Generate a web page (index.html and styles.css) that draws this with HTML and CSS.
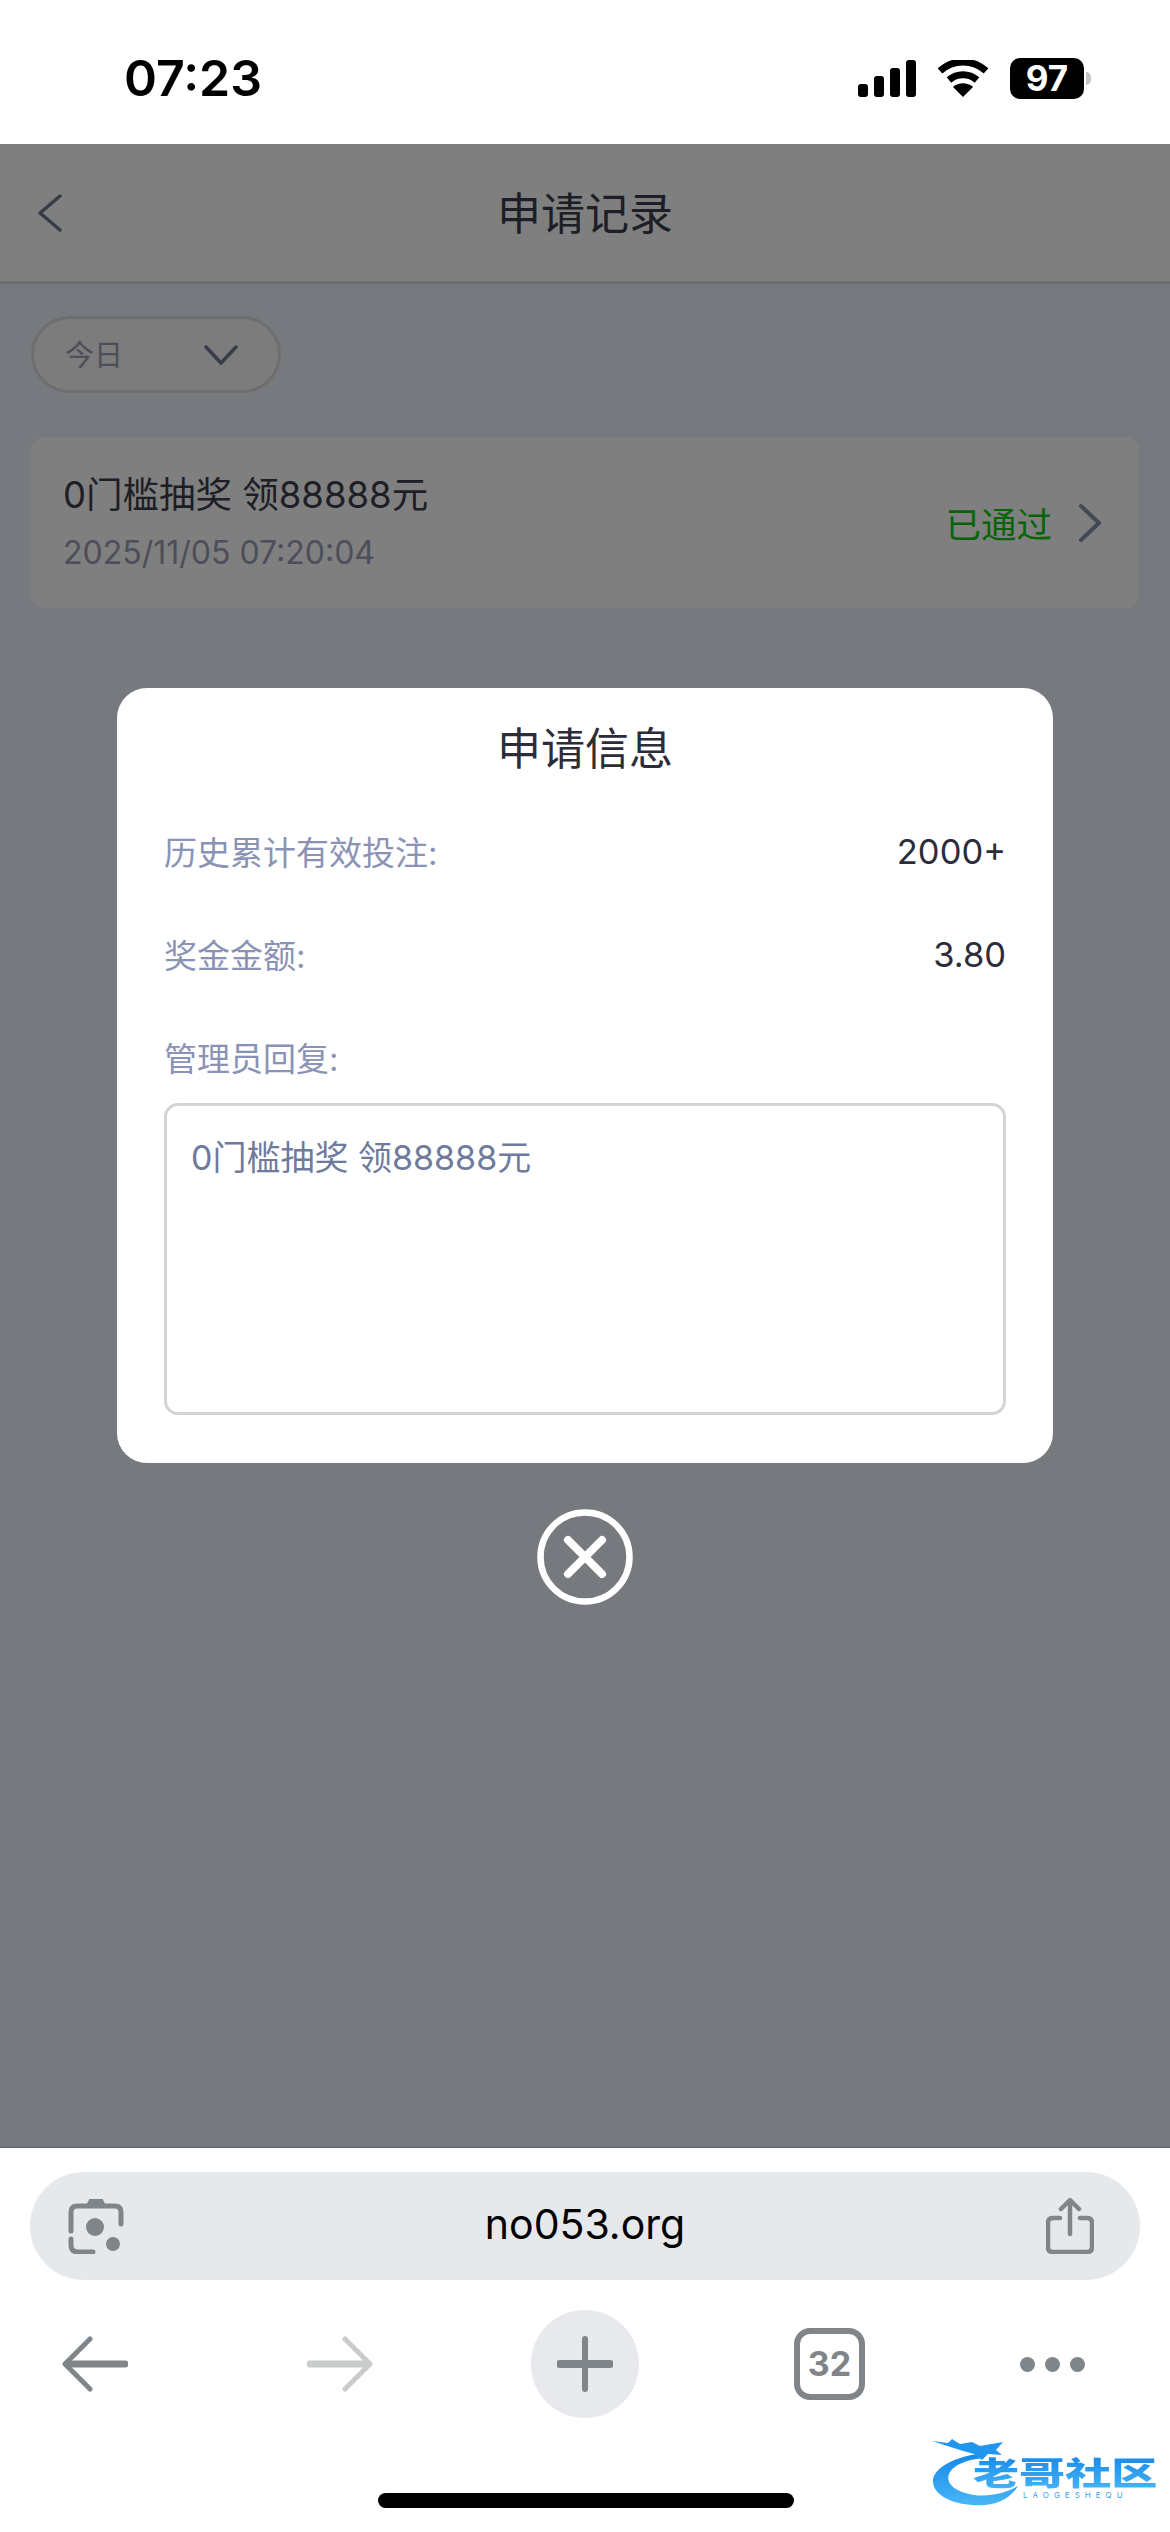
FILE: index.html
```html
<!DOCTYPE html>
<html lang="zh-CN">
<head>
  <meta charset="UTF-8">
  <meta name="viewport" content="width=device-width, initial-scale=1.0">
  <title>申请记录</title>
  <link rel="stylesheet" href="styles.css">
</head>
<body>
  <div class="status-bar">
    <div class="status-bar__time">07:23</div>
    <div class="status-bar__icons">
      <svg class="icon-signal" width="58" height="37" viewBox="0 0 58 37">
        <rect x="0" y="24" width="10" height="13" rx="3"/>
        <rect x="16" y="16" width="10" height="21" rx="3"/>
        <rect x="32" y="8" width="10" height="29" rx="3"/>
        <rect x="48" y="0" width="10" height="37" rx="3"/>
      </svg>
      <svg class="icon-wifi" width="50" height="37" viewBox="0 0 50 37">
        <path d="M2 11 C15 -1 35 -1 48 11" fill="none" stroke="#000" stroke-width="7"/>
        <path d="M11 20 C19 13 31 13 39 20" fill="none" stroke="#000" stroke-width="7"/>
        <path d="M25 37 L15 27 C21 22 29 22 35 27 Z"/>
      </svg>
      <div class="battery">
        <div class="battery__body">97</div>
        <div class="battery__nub"></div>
      </div>
    </div>
  </div>

  <div class="webview">
    <div class="nav">
      <svg class="nav__back" width="26" height="38" viewBox="0 0 26 38">
        <path d="M23 2 L3 19 L23 36" fill="none" stroke="#6c7890" stroke-width="3.5" stroke-linecap="round" stroke-linejoin="round"/>
      </svg>
      <div class="nav__title">申请记录</div>
    </div>

    <div class="records">
      <div class="filter">
        <span class="filter__label">今日</span>
        <svg width="34" height="20" viewBox="0 0 34 20">
          <path d="M2 2 L17 18 L32 2" fill="none" stroke="#6c7890" stroke-width="3.5" stroke-linecap="round" stroke-linejoin="round"/>
        </svg>
      </div>

      <div class="record">
        <div class="record__main">
          <div class="record__title">0门槛抽奖 领88888元</div>
          <div class="record__date">2025/11/05 07:20:04</div>
        </div>
        <div class="record__status">已通过</div>
        <svg class="record__arrow" width="24" height="38" viewBox="0 0 24 38">
          <path d="M3 2 L21 19 L3 36" fill="none" stroke="#8490a8" stroke-width="4" stroke-linecap="round" stroke-linejoin="round"/>
        </svg>
      </div>
    </div>

    <div class="overlay">
      <div class="modal">
        <div class="modal__title">申请信息</div>
        <div class="modal__row">
          <span class="modal__label">历史累计有效投注:</span>
          <span class="modal__value">2000+</span>
        </div>
        <div class="modal__row">
          <span class="modal__label">奖金金额:</span>
          <span class="modal__value">3.80</span>
        </div>
        <div class="modal__row">
          <span class="modal__label">管理员回复:</span>
        </div>
        <div class="modal__reply">0门槛抽奖 领88888元</div>
      </div>
      <svg class="modal-close" width="96" height="96" viewBox="0 0 96 96">
        <circle cx="48" cy="48" r="44.5" fill="none" stroke="#fff" stroke-width="6.5"/>
        <path d="M31 31 L65 65 M65 31 L31 65" fill="none" stroke="#fff" stroke-width="8" stroke-linecap="round"/>
      </svg>
    </div>
  </div>

  <div class="chrome">
    <div class="url-bar">
      <svg class="url-bar__icon" width="56" height="56" viewBox="0 0 56 56" fill="none" stroke="#7f8589" stroke-width="5" stroke-linecap="round">
        <path d="M3 33 V14 Q3 8 9 8 H47 Q53 8 53 14 V26"/>
        <path d="M3 41 V47 Q3 54 10 54 H25"/>
        <path d="M19 8 L22 2 H34 L37 8 Z" fill="#7f8589" stroke-width="2"/>
        <circle cx="27" cy="29" r="9" fill="#7f8589" stroke="none"/>
        <circle cx="45" cy="46" r="7" fill="#7f8589" stroke="none"/>
      </svg>
      <div class="url-bar__text">no053.org</div>
      <svg class="url-bar__icon" width="48" height="56" viewBox="0 0 48 56" fill="none" stroke="#7f8589" stroke-width="4.5" stroke-linecap="round" stroke-linejoin="round">
        <path d="M14 20 H7 Q2 20 2 25 V49 Q2 54 7 54 H41 Q46 54 46 49 V25 Q46 20 41 20 H34"/>
        <path d="M24 36 V3 M15 11 L24 2 L33 11"/>
      </svg>
    </div>

    <div class="toolbar">
      <svg class="toolbar__back" width="66" height="56" viewBox="0 0 66 56" fill="none" stroke="#7f8589" stroke-linecap="round" stroke-linejoin="round">
        <path d="M28 3 L3 28 L28 53" stroke-width="5"/>
        <path d="M5 28 H63" stroke-width="7"/>
      </svg>
      <svg class="toolbar__forward" width="66" height="56" viewBox="0 0 66 56" fill="none" stroke="#c9cbcc" stroke-linecap="round" stroke-linejoin="round">
        <path d="M38 3 L63 28 L38 53" stroke-width="5"/>
        <path d="M3 28 H61" stroke-width="7"/>
      </svg>
      <div class="toolbar__plus">
        <svg width="56" height="56" viewBox="0 0 56 56" fill="none" stroke="#7f8589" stroke-linecap="round">
          <path d="M28 3 V53" stroke-width="6"/>
          <path d="M3 28 H53" stroke-width="8"/>
        </svg>
      </div>
      <div class="toolbar__tabs">32</div>
      <div class="toolbar__more"><i></i><i></i><i></i></div>
    </div>

    <div class="home-indicator"></div>
  </div>

  <div class="watermark">
    <svg class="watermark__dragon" width="225" height="80" viewBox="0 0 225 80">
      <defs>
        <linearGradient id="dragon" x1="0" y1="0" x2="0" y2="1">
          <stop offset="0" stop-color="#1488ea"/>
          <stop offset="1" stop-color="#49b6f7"/>
        </linearGradient>
      </defs>
      <path d="M48 24 C20 28 2 40 3 52 C4 68 30 77 55 75 C70 74 82 66 88 56 C76 63 60 67 44 65 C24 62 14 52 20 42 C24 35 36 30 52 28 Z" fill="url(#dragon)"/>
      <path d="M2 11 L18 13 L22 9 L30 14 L42 12 L50 16 L73 12 L66 20 L72 25 L58 24 L52 30 L44 24 L30 20 Z" fill="#2196ee"/>
    </svg>
    <div class="watermark__name">老哥社区</div>
    <div class="watermark__sub">LAOGESHEQU</div>
  </div>
</body>
</html>
```

FILE: styles.css
```css
* {
  box-sizing: border-box;
}

html, body {
  margin: 0;
  padding: 0;
  width: 1170px;
  height: 2532px;
  overflow: hidden;
  background: white;
  font-family: Inter, "Noto Sans CJK SC", sans-serif;
}

body {
  position: relative;
  display: flex;
  flex-direction: column;
}

.status-bar {
  display: flex;
  align-items: center;
  justify-content: space-between;
  flex: none;
  height: 144px;
  padding: 12px 79px 0 124px;
  background: white;
}

.status-bar__time {
  color: black;
  font-size: 50px;
  font-weight: 600;
  line-height: 1;
}

.status-bar__icons {
  display: flex;
  align-items: center;
  gap: 22px;
}

.battery {
  display: flex;
  align-items: center;
}

.battery__body {
  width: 74px;
  height: 41px;
  border-radius: 10px;
  background: black;
  color: white;
  font-size: 35px;
  font-weight: 700;
  line-height: 41px;
  text-align: center;
}

.battery__nub {
  width: 5px;
  height: 13px;
  margin-left: 2px;
  border-radius: 0 6px 6px 0;
  background: #c4c4c4;
}

.webview {
  position: relative;
  flex: 1;
  background: #ecf4fe;
}

.nav {
  position: relative;
  display: flex;
  align-items: center;
  justify-content: center;
  height: 140px;
  padding-top: 2px;
  border-bottom: 3px solid #dcdcdc;
  background: white;
}

.nav__back {
  position: absolute;
  top: 50px;
  left: 37px;
}

.nav__title {
  color: #3c3c4c;
  font-size: 44px;
  line-height: 1;
}

.records {
  display: flex;
  flex-direction: column;
  align-items: flex-start;
  padding: 32px 31px 0;
}

.filter {
  display: flex;
  align-items: center;
  justify-content: space-between;
  width: 250px;
  height: 77px;
  padding: 0 40px 0 31px;
  border: 3px solid #dcdcdc;
  border-radius: 39px;
  background: #f8f8fa;
}

.filter__label {
  margin-top: -4px;
  color: #989cb0;
  font-size: 29px;
}

.record {
  display: flex;
  align-items: center;
  width: 100%;
  height: 171px;
  margin-top: 44px;
  padding: 0 37px 0 32px;
  border-radius: 14px;
  background: white;
}

.record__main {
  flex: 1;
}

.record__title {
  color: #3c3c4c;
  font-size: 36.5px;
  line-height: 44px;
}

.record__date {
  margin-top: 17px;
  color: #989cb4;
  font-size: 32px;
  line-height: 38px;
}

.record__status {
  margin-right: 26px;
  color: #10c810;
  font-size: 35.5px;
}

.overlay {
  position: absolute;
  top: 0;
  right: 0;
  bottom: 0;
  left: 0;
  display: flex;
  flex-direction: column;
  align-items: center;
  padding-top: 544px;
  background: rgba(0, 0, 0, 0.5);
}

.modal {
  width: 936px;
  height: 775px;
  padding: 33px 47px 0;
  border-radius: 30px;
  background: white;
}

.modal__title {
  color: #2c2c3a;
  font-size: 44px;
  line-height: 56px;
  text-align: center;
}

.modal__row {
  display: flex;
  align-items: center;
  justify-content: space-between;
  height: 44px;
  margin-top: 59px;
  font-size: 33px;
}

.modal__title + .modal__row {
  margin-top: 52px;
}

.modal__label {
  color: #8a93b5;
}

.modal__value {
  color: #2c2c3a;
  font-size: 34.5px;
}

.modal__reply {
  height: 312px;
  margin-top: 24px;
  padding: 30px 24px;
  border: 3px solid #d4d4d4;
  border-radius: 14px;
  color: #6f7a9c;
  font-size: 34px;
  line-height: 44px;
}

.modal-close {
  margin-top: 46px;
}

.chrome {
  flex: none;
  height: 385px;
  padding-top: 24px;
  border-top: 1px solid #5e6165;
  background: white;
}

.url-bar {
  display: flex;
  align-items: center;
  justify-content: space-between;
  width: 1110px;
  height: 108px;
  margin-left: 30px;
  padding: 0 46px 0 38px;
  border-radius: 54px;
  background: #e6e9ec;
}

.url-bar__text {
  margin-bottom: 5px;
  color: black;
  font-size: 41px;
}

.toolbar {
  display: flex;
  align-items: center;
  gap: 155px;
  height: 108px;
  margin-top: 30px;
  padding-left: 62px;
}

.toolbar__back {
  margin-right: 24px;
}

.toolbar__forward {
  margin-right: 3px;
}

.toolbar__plus {
  display: flex;
  align-items: center;
  justify-content: center;
  width: 108px;
  height: 108px;
  border-radius: 50%;
  background: #e8e9ed;
}

.toolbar__tabs {
  width: 71px;
  height: 72px;
  border: 6px solid #7f8589;
  border-radius: 16px;
  color: #7f8589;
  font-size: 34px;
  font-weight: 700;
  line-height: 60px;
  text-align: center;
}

.toolbar__more {
  display: flex;
  gap: 10px;
}

.toolbar__more i {
  width: 15px;
  height: 15px;
  border-radius: 50%;
  background: #7f8589;
}

.home-indicator {
  width: 416px;
  height: 15px;
  margin: 75px 0 0 378px;
  border-radius: 8px;
  background: black;
}

/* site watermark stamped over the corner of the screenshot */
.watermark {
  position: absolute;
  top: 2430px;
  left: 930px;
  width: 225px;
  height: 80px;
}

.watermark__dragon {
  position: absolute;
  top: 0;
  left: 0;
}

.watermark__name {
  position: absolute;
  top: 24px;
  left: 43px;
  background: linear-gradient(#1488ea, #4db8f8);
  -webkit-background-clip: text;
  background-clip: text;
  color: transparent;
  font-size: 32px;
  font-weight: 900;
  line-height: 40px;
  white-space: nowrap;
  transform: scaleX(1.44);
  transform-origin: left center;
}

.watermark__sub {
  position: absolute;
  top: 61px;
  left: 93px;
  color: #3d9fea;
  font-size: 8px;
  letter-spacing: 5px;
  line-height: 9px;
}
```
